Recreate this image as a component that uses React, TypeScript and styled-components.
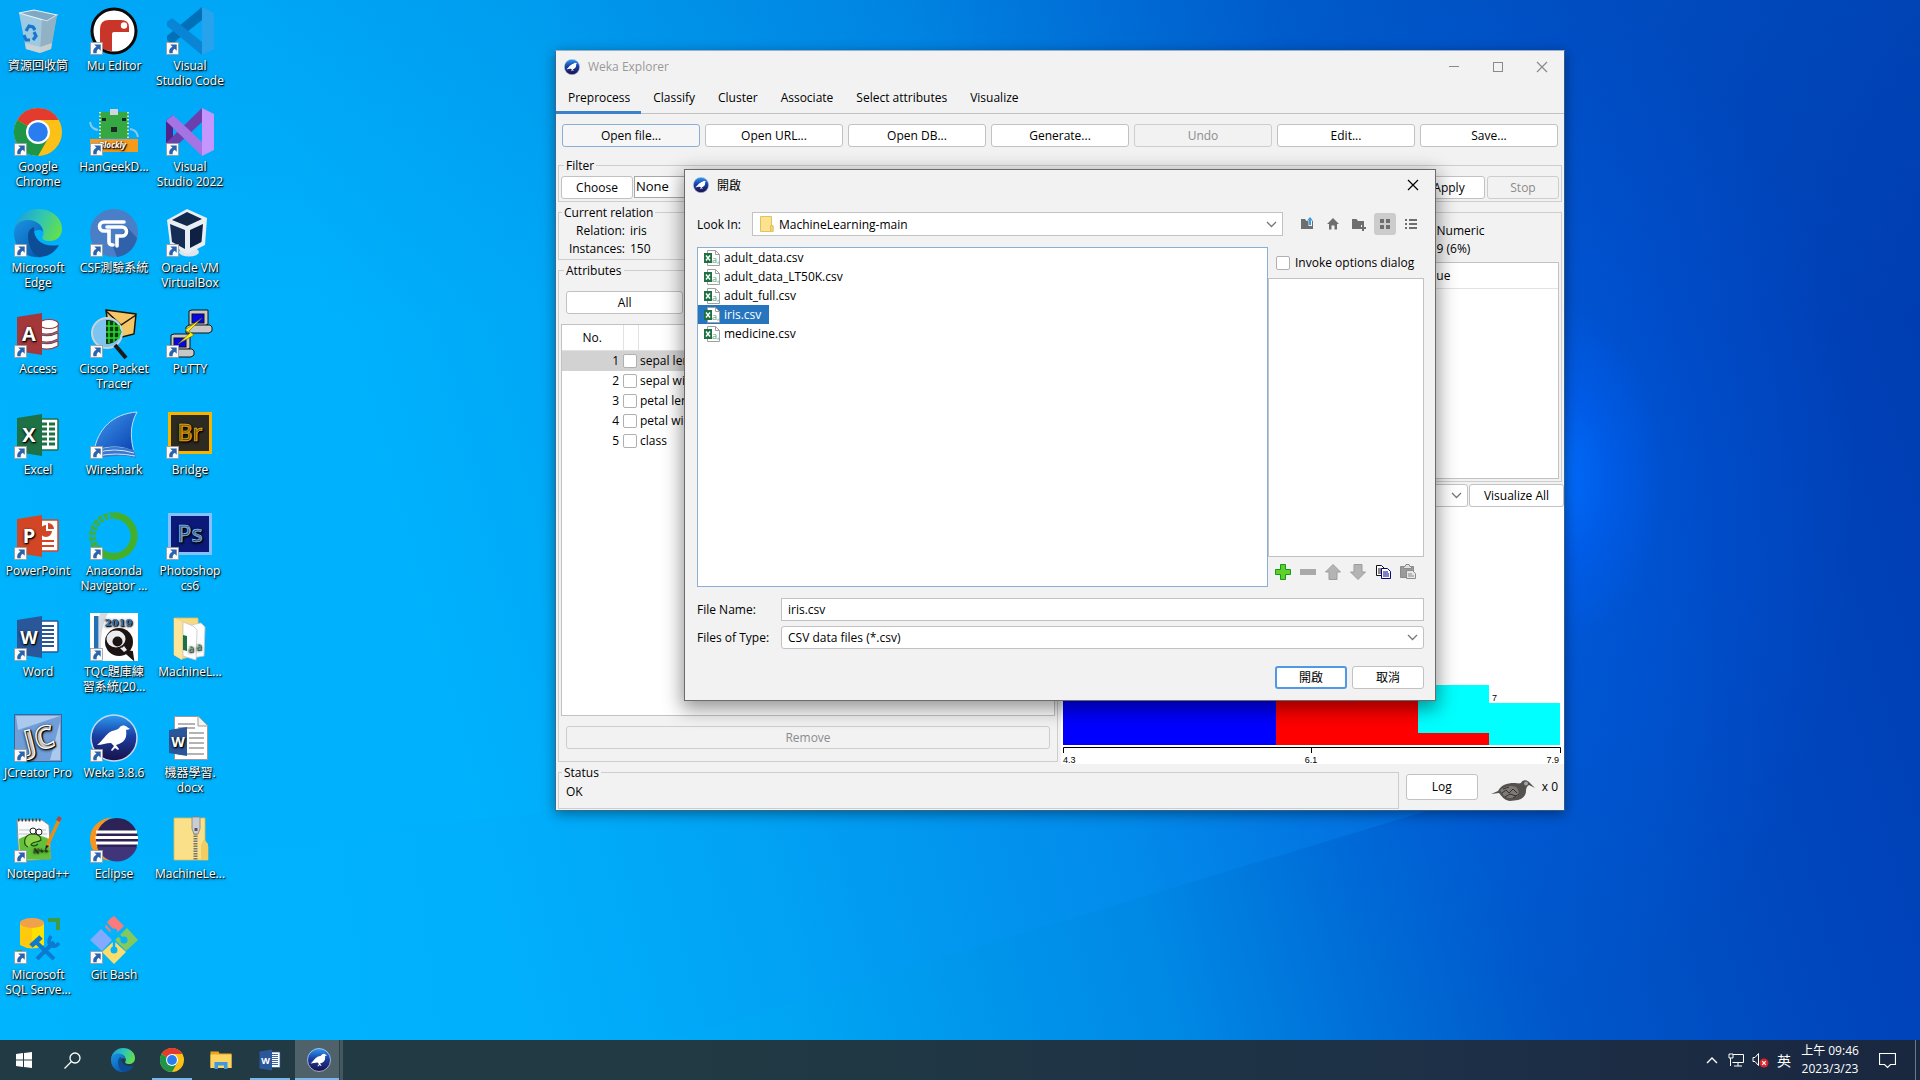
import React, { useState } from 'react';
import styled, { createGlobalStyle, css } from 'styled-components';

const uiFont = '"Open Sans", "Noto Sans CJK TC", sans-serif';

const GlobalStyle = createGlobalStyle`
  * { box-sizing: border-box; }
  html, body { margin: 0; height: 100%; overflow: hidden; }
  #root { height: 100%; }
  body, button, input, select { font-family: ${uiFont}; font-size: 12px; color: #000; }
  button, input, select { margin: 0; padding: 0; }
`;

/* ---------- desktop ---------- */

const Desktop = styled.div`
  position: relative;
  display: flex;
  flex-direction: column;
  height: 100vh;
  overflow: hidden;
  isolation: isolate;
  background:
    radial-gradient(ellipse 110px 170px at 81% 44%, rgba(0, 110, 255, 0.95), rgba(0, 100, 255, 0.4) 50%, transparent),
    radial-gradient(ellipse 340px 520px at 79% 46%, rgba(0, 98, 240, 0.55), transparent),
    linear-gradient(180deg, rgba(0, 110, 210, 0.18), transparent 30%),
    linear-gradient(75deg, #00b4fd 0%, #00b2fd 24%, #00a4f3 37%, #0088e5 54%, #0070d8 62%, #0057c9 71%, #0046bd 84%, #003aaf 100%);
`;

const Wallpaper = styled.svg`
  position: absolute;
  inset: 0;
  width: 100%;
  height: 100%;
  z-index: -1;
`;

const IconGrid = styled.ul`
  flex: 1;
  align-self: flex-start;
  display: grid;
  grid-auto-flow: column;
  grid-template-rows: repeat(10, 101px);
  grid-auto-columns: 76px;
  margin: 0;
  padding: 7px 0 0;
  list-style: none;
`;

const DesktopLink = styled.a`
  display: flex;
  flex-direction: column;
  align-items: center;
  gap: 3px;
  color: #fff;
  text-decoration: none;
  text-align: center;
  line-height: 15px;
  white-space: pre;
  text-shadow: 1px 1px 1px #000, 0 1px 3px rgba(0, 0, 0, 0.9);
`;

const Picture = styled.svg`
  display: block;
  width: 48px;
  height: 48px;
  overflow: visible;
`;

/* ---------- shared controls ---------- */

const Button = styled.button<{ $wide?: boolean; $tone?: 'plain' | 'focus' | 'default' }>`
  height: 23px;
  width: ${p => (p.$wide ? '100%' : '72px')};
  flex: none;
  border: 1px solid #c2c2c2;
  border-radius: 3px;
  background: #fff;
  line-height: 20px;
  ${p => p.$tone === 'focus' && css`background: #f6f6f6; border-color: #89b0d4;`}
  ${p => p.$tone === 'default' && css`border: 2px solid #4f9ae3; line-height: 18px;`}
  &:disabled { background: #f2f2f2; border-color: #cdcdcd; color: #8c8c8c; }
`;

const CheckBox = styled.input`
  appearance: none;
  flex: none;
  display: block;
  width: 14px;
  height: 14px;
  border: 1px solid #b0b0b0;
  border-radius: 2px;
  background: #fff;
  &:checked { background: #4f9ae3; }
`;

const Group = styled.fieldset<{ $pad: string }>`
  min-width: 0;
  margin: 0;
  border: 1px solid #cdcdcd;
  padding: ${p => p.$pad};
`;

const Legend = styled.legend`
  margin-left: 3px;
  padding: 2px 2px 0;
  line-height: 14px;
`;

/* ---------- explorer window ---------- */

const ExplorerWindow = styled.main`
  position: absolute;
  left: 555px;
  top: 50px;
  width: 1010px;
  border: 1px solid rgba(70, 100, 130, 0.7);
  border-top-color: #9ab0c4;
  background: #f2f2f2;
  background-clip: padding-box;
  box-shadow: 0 3px 12px rgba(0, 0, 0, 0.4);
`;

const TitleBar = styled.header<{ $active?: boolean }>`
  display: flex;
  align-items: center;
  gap: 8px;
  height: ${p => (p.$active ? '30px' : '31px')};
  padding-left: 8px;
  color: ${p => (p.$active ? '#000' : '#999')};
  line-height: 16px;
`;

const TitleText = styled.h1`
  flex: 1;
  margin: 0;
  font-size: 12px;
  font-weight: 400;
`;

const DialogTitle = styled(TitleText)`
  padding-top: 2px;
`;

const CaptionButtons = styled.div`
  display: flex;
`;

const CaptionButton = styled.button<{ $active?: boolean }>`
  display: grid;
  place-items: center;
  width: 44px;
  height: 30px;
  border: 0;
  background: none;
  color: ${p => (p.$active ? '#000' : '#8a8a8a')};
`;

const TabBar = styled.nav`
  display: flex;
  height: 32px;
  border-bottom: 1px solid #c2c2c2;
`;

const Tab = styled.button<{ $current: boolean }>`
  height: 32px;
  padding: 2px 11px 0 12px;
  border: 0;
  border-bottom: 3px solid ${p => (p.$current ? '#3d81c6' : 'transparent')};
  background: none;
`;

const Toolbar = styled.div`
  display: grid;
  grid-template-columns: repeat(7, 1fr);
  gap: 5px;
  padding: 10px 6px;
`;

const FilterSection = styled.section`
  padding: 0 2px 2px;
`;

const FilterRow = styled.div`
  display: flex;
  gap: 1px;
`;

const FilterField = styled.input`
  flex: 1;
  min-width: 0;
  height: 22px;
  margin-right: 1px;
  padding: 0 1px 3px;
  border: 1px solid #a8a8a8;
  font-size: 13px;
  background: #fff;
`;

const FilterActions = styled.div`
  display: flex;
  gap: 2px;
`;

const Columns = styled.div`
  display: grid;
  grid-template-columns: 1fr 1fr;
  gap: 2px;
`;

const Column = styled.div<{ $pad: string }>`
  display: flex;
  flex-direction: column;
  gap: 2px;
  min-width: 0;
  padding: ${p => p.$pad};
`;

const Facts = styled.dl<{ $cols: string }>`
  display: grid;
  grid-template-columns: ${p => p.$cols};
  column-gap: 5px;
  margin: 0;
  line-height: 18px;
  dt { text-align: right; }
  dd { margin: 0; }
`;

const AttributeGroup = styled(Group)`
  flex: 1;
  display: flex;
  flex-direction: column;
`;

const AttributeStack = styled.div`
  display: flex;
  flex-direction: column;
  gap: 10px;
  height: 483px;
  padding: 13px 0 12px;
`;

const SelectionRow = styled.div<{ $columns: number }>`
  display: grid;
  grid-template-columns: repeat(${p => p.$columns}, 1fr);
  gap: 5px;
  padding: 0 5px;
`;

const SelectedAttribute = styled(Group)`
  display: flex;
  flex-direction: column;
  margin-right: 2px;
`;

const SelectedStack = styled.div`
  display: flex;
  flex-direction: column;
  gap: 4px;
`;

const TableFrame = styled.div<{ $height?: string }>`
  flex: 1 1 auto;
  ${p => p.$height && `height: ${p.$height};`}
  border: 1px solid #c2c2c2;
  background: #fff;
  overflow: hidden;
`;

const Table = styled.table`
  width: 100%;
  table-layout: fixed;
  border-collapse: collapse;
  th, td { padding: 0; font-weight: 400; }
  thead th { height: 25px; border-bottom: 1px solid #e2e2e2; border-right: 1px solid #e2e2e2; }
  thead th:last-child { border-right: 0; }
`;

const NumberHead = styled.th` width: 61px; `;
const TickHead = styled.th` width: 15px; `;

const AttributeRow = styled.tr<{ $current: boolean }>`
  height: 20px;
  background: ${p => (p.$current ? '#d2d2d2' : '#fff')};
  td { line-height: 20px; }
  td:first-child { text-align: right; padding-right: 4px; }
  td:last-child { padding-left: 2px; }
`;

const VisualizeRow = styled.div`
  display: flex;
  gap: 1px;
`;

const VisualizeButton = styled(Button)` width: 95px; `;

const SelectBox = styled.span<{ $tall?: boolean }>`
  position: relative;
  display: flex;
  align-items: center;
  flex: 1;
  min-width: 0;
  height: ${p => (p.$tall ? '24px' : '23px')};
  padding-left: ${p => (p.$tall ? '7px' : '6px')};
  gap: 5px;
  border: 1px solid #c2c2c2;
  border-radius: ${p => (p.$tall ? '0' : '3px')};
  background: #fff;
`;

const Select = styled.select`
  appearance: none;
  flex: 1;
  min-width: 0;
  height: 100%;
  border: 0;
  background: transparent;
  outline: 0;
`;

const Arrow = styled.svg`
  position: absolute;
  right: 5px;
  pointer-events: none;
`;

const ChartPanel = styled.div`
  margin-top: -2px;
  background: #fff;
`;

const Chart = styled.svg`
  display: block;
  width: 100%;
  font: 9px "Liberation Sans", sans-serif;
`;

const StatusRow = styled.footer`
  display: flex;
  align-items: center;
  padding: 0 6px 1px 2px;
`;

const StatusGroup = styled(Group)`
  flex: 1;
`;

const StatusText = styled.output`
  display: block;
  padding: 0 7px;
  line-height: 18px;
`;

const LogButton = styled(Button)`
  height: 26px;
  margin: 0 13px 0 7px;
`;

const Workers = styled.span`
  display: flex;
  align-items: center;
  gap: 7px;
`;

/* ---------- open dialog ---------- */

const Dialog = styled.section`
  position: absolute;
  left: 684px;
  top: 169px;
  width: 752px;
  border: 1px solid #6b6b6b;
  background: #f2f2f2;
  box-shadow: 0 6px 18px 2px rgba(0, 0, 0, 0.42);
`;

const DialogBody = styled.div`
  display: flex;
  flex-direction: column;
  gap: 11px;
  padding: 12px 11px 11px 12px;
`;

const LookRow = styled.div`
  display: flex;
  align-items: center;
  gap: 13px;
  padding-right: 2px;
`;

const LookLabel = styled.label`
  flex: none;
  width: 42px;
  white-space: nowrap;
`;

const ViewTools = styled.div`
  display: flex;
  gap: 4px;
`;

const ToolButton = styled.button<{ $pressed?: boolean }>`
  display: grid;
  place-items: center;
  width: 22px;
  height: 22px;
  border: 0;
  border-radius: 3px;
  background: ${p => (p.$pressed ? '#cccccc' : 'none')};
`;

const Browser = styled.div`
  display: grid;
  grid-template-columns: 1fr 156px;
  height: 340px;
`;

const FileList = styled.div`
  display: flex;
  flex-direction: column;
  align-items: flex-start;
  border: 1px solid #89b0d4;
  background: #fff;
`;

const FileItem = styled.button<{ $selected: boolean }>`
  display: flex;
  align-items: center;
  gap: 4px;
  height: 19px;
  padding: 0 8px 0 6px;
  border: 0;
  background: ${p => (p.$selected ? '#2675bf' : 'none')};
  color: ${p => (p.$selected ? '#fff' : '#000')};
`;

const Accessory = styled.div`
  display: flex;
  flex-direction: column;
`;

const InvokeLabel = styled.label`
  display: flex;
  align-items: center;
  gap: 5px;
  height: 31px;
  padding-left: 8px;
  white-space: nowrap;
`;

const OptionArea = styled.div`
  flex: 1;
  border: 1px solid #c2c2c2;
  background: #fff;
`;

const OptionTools = styled.div`
  display: flex;
  gap: 3px;
  padding: 4px 0 4px 4px;
`;

const Fields = styled.div`
  display: grid;
  grid-template-columns: 84px 1fr;
  align-items: center;
  row-gap: 5px;
`;

const NameField = styled.input`
  height: 23px;
  padding: 0 6px;
  border: 1px solid #c2c2c2;
  background: #fff;
  outline: 0;
`;

const Actions = styled.div`
  display: flex;
  justify-content: flex-end;
  gap: 5px;
  padding-top: 6px;
`;

/* ---------- taskbar ---------- */

const Taskbar = styled.footer`
  display: flex;
  gap: 3px;
  flex: none;
  height: 40px;
  color: #fff;
  background: linear-gradient(90deg, #213a43 0%, #213a43 35%, #1d3047 75%, #19273f 100%);
`;

const TaskGroup = styled.div<{ $spaced?: boolean }>`
  display: flex;
  gap: ${p => (p.$spaced ? '1px' : '0')};
`;

const TaskButton = styled.button<{ $state?: 'open' | 'active' }>`
  position: relative;
  display: grid;
  place-items: center;
  width: 48px;
  height: 40px;
  border: 0;
  background: ${p =>
    p.$state === 'active' ? 'linear-gradient(90deg, #4f6269 44px, #2a3f47 44px, #2a3f47 45px, #46585f 45px)' : 'none'};
  &::after {
    content: '';
    position: absolute;
    bottom: 0;
    left: ${p => (p.$state === 'active' ? '0' : '4px')};
    right: 4px;
    height: 2px;
    background: ${p => (p.$state ? '#76b9ed' : 'transparent')};
  }
`;

const Tray = styled.div`
  display: flex;
  align-items: center;
  margin: 0 4px 0 auto;
  padding-right: 5px;
  border-right: 1px solid #6e7884;
`;

const TrayButton = styled.button<{ $width: string }>`
  display: grid;
  place-items: center;
  width: ${p => p.$width};
  height: 40px;
  border: 0;
  background: none;
  color: #fff;
`;

const Language = styled(TrayButton)` font-size: 14px; `;

const Clock = styled.time`
  width: 68px;
  text-align: center;
  line-height: 18px;
  white-space: pre;
`;

/* ---------- drawings ---------- */

const GlyphText = styled.text<{ $weight?: number }>`
  font-family: "Open Sans", sans-serif;
  font-weight: ${p => p.$weight || 700};
`;

const Shortcut = () => (
  <g>
    <rect x="0.5" y="35.5" width="12" height="12" fill="#fafafa" stroke="#9a9a9a" strokeWidth="0.8" />
    <path d="M4.3 37.5h6.4v6.3l-2-2c-1.6.8-2.2 2.2-2 4.4H3.4c-.8-3.2.6-5.200 3.1-6.500z" fill="#2a62ab" />
  </g>
);

const RecycleArt = () => (
  <g>
    <path d="M5 6l7 36 14 4 11-4 6-34-10 5z" fill="#b9cfdd" opacity="0.85" />
    <path d="M5 6L20 3l23 5-10 6z" fill="#7fa9c2" stroke="#e6eff5" strokeWidth="1.2" />
    <path d="M28 13l5 1 10-6-6 34-11 4z" fill="#8ea9ba" opacity="0.75" />
    <path d="M11 36l15 4 12-4-1 6-11 4-14-4z" fill="#d5d5d3" opacity="0.8" />
    <g fill="none" stroke="#1677cf" strokeWidth="3.2">
      <path d="M12 24l3-5 4 1 2 3" />
      <path d="M10 28l2 5h4" />
      <path d="M19 33l3-4-2-4" />
    </g>
  </g>
);

const MuArt = () => (
  <g>
    <circle cx="24" cy="24" r="22" fill="#fff" stroke="#0a0a0a" strokeWidth="3" />
    <path d="M10 40V22q0-9 9-9h12q8 0 8 7v5H24q-2 0-2 2v17q-7 0-12-4z" fill="#c93528" />
    <circle cx="34" cy="18.5" r="3.200" fill="#fff" />
  </g>
);

const CodeArt = () => (
  <g>
    <path d="M36 0l12 6v36l-12 6z" fill="#27a3ee" />
    <path d="M36 0v13L6 37 1 33v-4z" fill="#0070b8" />
    <path d="M36 48V35L6 11 1 15v4z" fill="#0a84d4" />
  </g>
);

const StudioArt = () => (
  <g>
    <path d="M0 13l7-6v34l-7-6z" fill="#52218a" />
    <path d="M36 0v14L7 41l-7-6z" fill="#6b3fae" />
    <path d="M7 7l29 27v14L0 13z" fill="#a473e4" />
    <path d="M36 0l12 6v36l-12 6z" fill="#c596ff" />
  </g>
);

const ChromeArt = () => (
  <g>
    <circle cx="24" cy="24" r="24" fill="#fbc116" />
    <path d="M3.2 12a24 24 0 0 1 41.6 0H24v12z" fill="#e33b2e" />
    <path d="M3.200 12a24 24 0 0 0 20.800 36l10.400-18L24 24z" fill="#1e9648" />
    <circle cx="24" cy="24" r="12" fill="#fff" />
    <circle cx="24" cy="24" r="9.800" fill="#2a7df0" />
  </g>
);

const EdgeArt = ({ id }: { id: string }) => (
  <g>
    <defs>
      <linearGradient id={`${id}-top`} x1="0" x2="1" y1="0.3" y2="0.6">
        <stop offset="0" stopColor="#1b9fdc" />
        <stop offset="0.5" stopColor="#2fc6b4" />
        <stop offset="1" stopColor="#64e04b" />
      </linearGradient>
      <linearGradient id={`${id}-side`} x1="0" x2="0.7" y1="0" y2="1">
        <stop offset="0" stopColor="#1a94e4" />
        <stop offset="1" stopColor="#0a5bb0" />
      </linearGradient>
    </defs>
    <path d="M0 22C2 8 12 0 24 0c14 0 24 9 24 20 0 8-6 12-12 12-6 0-9-2-7-5 2-4 0-14-13-15C8 12 2 16 0 22z" fill={`url(#${id}-top)`} />
    <path d="M0 24c0-8 6-13 14-13 9 0 15 6 15 12-3-5-13-2-13 9 0 8 4 13 12 16C12 50 0 39 0 24z" fill={`url(#${id}-side)`} />
    <path d="M14 27c0-5 3-8 6-9-1 12 8 21 25 18-5 9-13 12-20 12C18 45 14 36 14 27z" fill="#0c4d95" />
  </g>
);

const BlocklyArt = () => (
  <g>
    <path d="M0 14q1 7 8 8M40 21q7 1 8 8" fill="none" stroke="#8cc9ee" strokeWidth="2" />
    <path d="M10 4h28v26H10z" fill="#35a844" />
    <path d="M10 4v26M38 4v26" stroke="#d9e6a2" strokeWidth="2" strokeDasharray="1.5 2" />
    <rect x="20" y="1" width="8" height="6" fill="#d2d6da" />
    <rect x="21" y="19" width="6" height="5" fill="#1f2a26" />
    <rect x="12" y="10" width="4" height="3" fill="#112233" />
    <rect x="32" y="10" width="4" height="3" fill="#112233" />
    <rect x="0" y="31" width="48" height="13" fill="#f59a1c" />
    <GlyphText x="9" y="40" fontSize="8" fill="#fff" fontStyle="italic">Blockly</GlyphText>
  </g>
);

const CsfArt = () => (
  <g>
    <circle cx="24" cy="24" r="24" fill="#4a7fc8" />
    <path d="M37 18l10 11c-2 10-10 18-20 19l-4-10z" fill="#2f62a8" />
    <g fill="none" stroke="#fff" strokeWidth="3.600" strokeLinecap="round">
      <path d="M34 13H14a4.500 4.500 0 0 0 0 9h5v11q0 3 4 3" />
      <path d="M17 18h15a4.500 4.500 0 0 1 0 9h-5v10" />
    </g>
  </g>
);

const VirtualBoxArt = () => (
  <g>
    <path d="M13 38l9 8q6 2 10-3V33z" fill="#8b98ab" />
    <ellipse cx="23" cy="43" rx="10" ry="4.500" fill="#dfe5ec" />
    <path d="M1 11L21 0l20 9-2 27-18 9L4 35z" fill="#e9eef4" />
    <path d="M6 11l15-8 15 7-15 7z" fill="#13294c" />
    <path d="M4 15l15 6v19L6 33z" fill="#152d55" />
    <path d="M24 21l13-6-1.500 18L24 39z" fill="#0e2144" />
  </g>
);

type OfficeKind = 'access' | 'excel' | 'powerpoint' | 'word';
const officeColors: Record<OfficeKind, [string, string]> = {
  access: ['#a4373a', 'A'],
  excel: ['#1e7145', 'X'],
  powerpoint: ['#d24625', 'P'],
  word: ['#2a569a', 'W'],
};

const OfficeArt = ({ kind }: { kind: OfficeKind }) => {
  const [color, letter] = officeColors[kind];
  return (
    <g>
      {kind === 'access' ? (
        <g fill="#fff" stroke={color} strokeWidth="1.2">
          <path d="M26 33v5q9 3 18-2v-5q-8 4-18 2zM26 25v6q9 3 18-2v-6q-8 4-18 2zM26 17v6q9 3 18-2v-6q-8 4-18 2z" />
          <ellipse cx="35" cy="14" rx="9.500" ry="4.500" />
        </g>
      ) : (
        <rect x="24" y="8" width="20" height="31" rx="1" fill="#fff" stroke={color} strokeWidth="1.500" />
      )}
      {kind === 'excel' && <path d="M28 13h5M35 13h6M28 18h5M35 18h6M28 23h5M35 23h6M28 28h5M35 28h6M28 33h5M35 33h6" stroke={color} strokeWidth="3" />}
      {kind === 'word' && <path d="M28 13h12M28 17h12M28 21h12M28 25h12M28 29h12M28 33h12" stroke={color} strokeWidth="1.800" />}
      {kind === 'powerpoint' && (
        <g fill={color}>
          <path d="M32 13v6h6a6 6 0 1 1-6-6z" />
          <path d="M34 11a6 6 0 0 1 6 6h-6z" />
          <path d="M28 28h12v2H28zM28 33h12v2H28z" />
        </g>
      )}
      <path d="M3 7l25-4v42L3 41z" fill={color} />
      <GlyphText x="15" y="31" fontSize={kind === 'word' ? 18 : 20} fill="#fff" textAnchor="middle">{letter}</GlyphText>
    </g>
  );
};

const PacketArt = () => (
  <g>
    <path d="M16 0l30 4-2 20-24 6z" fill="#f3c765" stroke="#1c1408" strokeWidth="1.5" />
    <path d="M16 1l15 14L46 5" fill="none" stroke="#1c1408" strokeWidth="1.5" />
    <circle cx="17" cy="23" r="15" fill="#7fc4ee" stroke="#c9d4da" strokeWidth="2" />
    <path d="M16 10q12-1 15 12-3 12-15 12z" fill="#0d3a12" />
    <path d="M19 11v22M24 12v20M29 16v12M16 16h14M16 22h16M16 28h14" stroke="#23dc2c" strokeWidth="1.5" />
    <path d="M25 35l11 13" stroke="#1a1a1a" strokeWidth="4" />
  </g>
);

const Pc = ({ x, y }: { x: number; y: number }) => (
  <g transform={`translate(${x} ${y})`}>
    <path d="M2 1l3-1h16v14l-3 2H2z" fill="#c7c7c7" stroke="#111" />
    <rect x="5" y="4" width="12" height="9" fill="#0606e8" stroke="#111" />
    <path d="M-1 17l3-2h21l2 2v4l-3 2H-1z" fill="#c7c7c7" stroke="#111" />
  </g>
);

const PuttyArt = () => (
  <g>
    <Pc x={21} y={0} />
    <Pc x={3} y={24} />
    <path d="M36 8L19 20l5 3-12 11 16-9-5-4z" fill="#ffee10" stroke="#6a6200" strokeWidth="0.6" />
  </g>
);

const SharkArt = () => (
  <g>
    <defs>
      <linearGradient id="fin" x1="0" x2="1" y1="0" y2="1">
        <stop offset="0" stopColor="#3f9af0" />
        <stop offset="1" stopColor="#0a3fae" />
      </linearGradient>
    </defs>
    <path d="M4 40C8 18 22 3 47 1c-8 14-6 29-3 40-12-7-26-6-40-1z" fill="url(#fin)" stroke="#bfe0f8" strokeWidth="1" />
    <path d="M3 41q20-9 41-2l2 8q-10-3-20-2t-22 2z" fill="#3a78cf" />
    <path d="M6 42q18-6 38 0M8 45q18-4 37 0" stroke="#cfe4f8" strokeWidth="1" fill="none" />
  </g>
);

const AdobeArt = ({ letters, ink, frame, fill }: { letters: string; ink: string; frame: string; fill: string }) => (
  <g>
    <rect x="3.500" y="2.500" width="41" height="39" fill={fill} stroke={frame} strokeWidth="3" />
    <GlyphText $weight={600} x="24" y="30" fontSize="23" fill={ink} stroke={ink} strokeWidth="0.6" textAnchor="middle">{letters}</GlyphText>
  </g>
);

const AnacondaArt = () => (
  <g fill="none" stroke="#44b02a">
    <path d="M24 3.500a20.500 20.500 0 1 1-18 31" strokeWidth="7" />
    <path d="M5 34A20.500 20.500 0 0 1 24 3.500" strokeWidth="6.500" strokeDasharray="4 1.600" />
    <path d="M4 31A20.500 20.500 0 0 1 24 4" strokeWidth="1.500" stroke="#04adfb" strokeDasharray="2 3" />
  </g>
);

const TqcArt = () => (
  <g>
    <rect width="48" height="48" fill="#fff" />
    <path d="M10 0h8q-10 20-6 48H9V4z" fill="#d7dade" />
    <rect x="4" y="3" width="4.500" height="37" fill="#2271b5" />
    <text x="28.500" y="12.500" fontSize="10" fill="#2b6cb0" textAnchor="middle" fontFamily="DejaVu Serif, serif" fontWeight="700">2019</text>
    <circle cx="29" cy="29" r="14" fill="#1c1413" />
    <path d="M34 38l9 8-1-7z" fill="#1c1413" stroke="#1c1413" strokeWidth="2" />
    <ellipse cx="26" cy="26" rx="9.500" ry="8.500" fill="#ececed" />
    <circle cx="27.500" cy="28.500" r="5" fill="#1c1413" />
    <path d="M30 35q3 0 4-2l3 4-3 2z" fill="#ececed" />
  </g>
);

const FolderDocsArt = () => (
  <g>
    <path d="M8 5h24l1 36-17 5-8-4z" fill="#f6d980" stroke="#e0bb52" strokeWidth="0.8" />
    <path d="M25 12l10-2 4 4-1 29-12 2z" fill="#fcfcfc" stroke="#c7c7c7" strokeWidth="0.8" />
    <path d="M17 9l10 4 4 4-1 30-13-4z" fill="#fff" stroke="#c7c7c7" strokeWidth="0.8" />
    <path d="M8 5l8 4v38l-8-5z" fill="#fce59a" />
    <path d="M17 22l4 1v15l-4-1z" fill="#1e7145" />
    <GlyphText $weight={400} x="22" y="39" fontSize="10" fill="#59a57b">a</GlyphText>
    <GlyphText $weight={400} x="30" y="37" fontSize="10" fill="#59a57b">a</GlyphText>
  </g>
);

const JCreatorArt = () => (
  <g>
    <rect x="0.5" y="0.5" width="47" height="47" fill="#6f9ed9" stroke="#44638e" />
    <path d="M2 2h44L4 16zM46 8v38L36 46z" fill="#c4daf5" opacity="0.7" />
    <GlyphText x="25" y="36" fontSize="31" fill="#fff" stroke="#fff" strokeWidth="1.2" textAnchor="middle" transform="rotate(-14 24 24)">JC</GlyphText>
  </g>
);

const WekaArt = ({ id }: { id: string }) => (
  <g>
    <defs>
      <linearGradient id={id} x1="0" x2="0" y1="0" y2="1">
        <stop offset="0" stopColor="#2c9cf0" />
        <stop offset="0.45" stopColor="#1a3fa5" />
        <stop offset="1" stopColor="#1a0f45" />
      </linearGradient>
    </defs>
    <circle cx="24" cy="24" r="23" fill={`url(#${id})`} stroke="#c8d8f2" strokeWidth="1.5" />
    <path d="M7 31c6-4 8-11 15-14 3-1 6-1 8-4 2-2 5-2 7 0l3 2-4 1c1 6 0 11-7 14l-3 1 3 4-1 1-3-2-3 3-1-1 3-4-3-3c-5 0-9 2-14 2z" fill="#fff" />
  </g>
);

const DocxArt = () => (
  <g>
    <path d="M8.500 2.500h24l9 9v34h-33z" fill="#fff" stroke="#9b9b9b" />
    <path d="M32 2.500v9.500h9.500" fill="#f2f2f2" stroke="#9b9b9b" />
    <path d="M12 10h17M12 14h17M23 19h15M23 24h15M23 29h15M23 34h15M12 40h26" stroke="#9a9a9a" strokeWidth="1.5" />
    <path d="M3 16l18-3v29L3 39z" fill="#2a569a" />
    <GlyphText x="12" y="33" fontSize="14" fill="#fff" textAnchor="middle">W</GlyphText>
  </g>
);

const NotepadArt = () => (
  <g>
    <path d="M3 5h25l7 5 2 34-32 2z" fill="#fafafa" stroke="#8d8d8d" />
    <path d="M5 24q14-8 30 0l2 20-31 1z" fill="#5fc23a" />
    <path d="M5 15h27M5 19h28" stroke="#b4c5cf" />
    <path d="M4 5h24" stroke="#444" strokeWidth="3" strokeDasharray="1.5 2" />
    <path d="M14 32c-5-2-5-12 4-13 6-1 9 3 9 6-3 3-9 1-10 5q4 2 7-1" fill="#8cd34d" stroke="#214d12" strokeWidth="1.2" />
    <circle cx="19" cy="16" r="3" fill="#fff" stroke="#222" />
    <circle cx="25" cy="17" r="3" fill="#fff" stroke="#222" />
    <GlyphText $weight={400} x="19" y="38" fontSize="8" fontStyle="italic" fill="#222">N++</GlyphText>
    <path d="M33 31L45 5" stroke="#e58e1a" strokeWidth="3.5" />
    <path d="M44 6l2-4" stroke="#b14a3c" strokeWidth="4" />
    <path d="M31 35l1-5 3 1z" fill="#222" />
  </g>
);

const EclipseArt = () => (
  <g>
    <path d="M22 2C8 4 0 13 0 24s8 20 20 22C12 41 8 33 8 24S13 6 22 2z" fill="#f7941e" />
    <circle cx="27" cy="24" r="21" fill="#2c2255" />
    <path d="M7 32h40a21 21 0 0 1-40 0z" fill="#40347a" />
    <path d="M6 17h41M5.500 22.500h42.500M6 28h42" stroke="#fff" strokeWidth="2.800" />
  </g>
);

const ZipArt = () => (
  <g>
    <path d="M8 3h31v25l3 3v14H8z" fill="#fbe08a" stroke="#e0b94d" strokeWidth="0.8" />
    <path d="M38 24l4 5v16h-7V30z" fill="#f2cd64" />
    <path d="M29.500 18v27" stroke="#777" strokeWidth="4" strokeDasharray="1.5 1" />
    <path d="M26 2h8v12l-2 5h-4l-2-5z" fill="#c9ccd0" stroke="#7d8084" strokeWidth="0.8" />
    <rect x="28.500" y="13" width="3" height="3" fill="#555" />
  </g>
);

const SqlArt = () => (
  <g>
    <path d="M6 7v22q12 7 24 0V7z" fill="#ffc90e" />
    <path d="M18 7v25q8 0 12-3V7z" fill="#ffe100" />
    <ellipse cx="18" cy="7" rx="12" ry="5" fill="#f2a14b" />
    <path d="M34 2h12v12h-4V6h-8z" fill="#3f9b46" />
    <path d="M3 34h5v9H3z" fill="#3f9b46" />
    <g stroke="#0c7ad0" fill="none">
      <path d="M23 43l17-17M22 26l18 17" strokeWidth="4" />
      <path d="M17 30l10-9" strokeWidth="5" />
      <path d="M37 20q-4 6 0 9t8-2" strokeWidth="3.5" />
    </g>
  </g>
);

const GitArt = () => (
  <g>
    <path d="M24 0l10 10-10 10-9-9q2-7 9-11z" fill="#f97b7b" />
    <path d="M37 12l11 12-12 11-11-11z" fill="#83c95b" />
    <path d="M24 25l12 11-12 12-12-12z" fill="#fbdd6c" />
    <path d="M11 13l11 11-10 11L0 24z" fill="#82aaff" />
    <path d="M16 7l8 9v18M26 17l8 7" stroke="#06b3fb" strokeWidth="2.5" fill="none" />
    <circle cx="24" cy="16" r="3.500" fill="#06b3fb" />
    <circle cx="34" cy="24" r="3.500" fill="#06b3fb" />
    <circle cx="24" cy="34" r="3.500" fill="#06b3fb" />
  </g>
);

const FolderArt = () => (
  <g>
    <path d="M3 7h16l2 4h24v29H3z" fill="#e9a61c" />
    <path d="M3 13h42v27H3z" fill="#fcd462" />
    <path d="M11 42V28h26v14h-7v-7H18v7z" fill="#3b9ae0" />
  </g>
);

type Launcher = { label: string; art: React.ReactNode; linked?: boolean };

const launchers: Launcher[] = [
  { label: '資源回收筒', art: <RecycleArt />, linked: false },
  { label: 'Google\nChrome', art: <ChromeArt /> },
  { label: 'Microsoft\nEdge', art: <EdgeArt id="edge-desk" /> },
  { label: 'Access', art: <OfficeArt kind="access" /> },
  { label: 'Excel', art: <OfficeArt kind="excel" /> },
  { label: 'PowerPoint', art: <OfficeArt kind="powerpoint" /> },
  { label: 'Word', art: <OfficeArt kind="word" /> },
  { label: 'JCreator Pro', art: <JCreatorArt /> },
  { label: 'Notepad++', art: <NotepadArt /> },
  { label: 'Microsoft\nSQL Serve...', art: <SqlArt /> },
  { label: 'Mu Editor', art: <MuArt /> },
  { label: 'HanGeekD...', art: <BlocklyArt /> },
  { label: 'CSF測驗系統', art: <CsfArt /> },
  { label: 'Cisco Packet\nTracer', art: <PacketArt /> },
  { label: 'Wireshark', art: <SharkArt /> },
  { label: 'Anaconda\nNavigator ...', art: <AnacondaArt /> },
  { label: 'TQC題庫練\n習系統(20...', art: <TqcArt /> },
  { label: 'Weka 3.8.6', art: <WekaArt id="weka-desk" /> },
  { label: 'Eclipse', art: <EclipseArt /> },
  { label: 'Git Bash', art: <GitArt /> },
  { label: 'Visual\nStudio Code', art: <CodeArt /> },
  { label: 'Visual\nStudio 2022', art: <StudioArt /> },
  { label: 'Oracle VM\nVirtualBox', art: <VirtualBoxArt /> },
  { label: 'PuTTY', art: <PuttyArt /> },
  { label: 'Bridge', art: <AdobeArt letters="Br" ink="#f9b80e" frame="#f4b400" fill="#2d2a22" /> },
  { label: 'Photoshop\ncs6', art: <AdobeArt letters="Ps" ink="#8ac2fb" frame="#86bffa" fill="#0b1a78" /> },
  { label: 'MachineL...', art: <FolderDocsArt />, linked: false },
  { label: '機器學習.\ndocx', art: <DocxArt />, linked: false },
  { label: 'MachineLe...', art: <ZipArt />, linked: false },
];

const Chevron = () => (
  <Arrow width="11" height="7" viewBox="0 0 11 7" aria-hidden>
    <path d="M1 1l4.500 4.500L10 1" fill="none" stroke="#777" strokeWidth="1.3" />
  </Arrow>
);

const CsvIcon = () => (
  <svg width="16" height="16" viewBox="0 0 16 16" aria-hidden>
    <path d="M3.500.5h8l4 4v11h-12z" fill="#fff" stroke="#a0a0a0" />
    <path d="M11.500.5v4h4" fill="none" stroke="#a0a0a0" />
    <rect x="0" y="3" width="8" height="10" fill="#1e7145" />
    <path d="M2 5.500l4 5M6 5.500l-4 5" stroke="#fff" strokeWidth="1.4" />
    <GlyphText $weight={400} x="8" y="13" fontSize="9" fill="#4fa37a">a,</GlyphText>
  </svg>
);

const FolderIcon = () => (
  <svg width="14" height="16" viewBox="0 0 14 16" aria-hidden>
    <path d="M.5.5h11V9l1.500 1v5.500H.5z" fill="#fde38f" stroke="#e3c15f" />
    <path d="M10.500 9.500h2.500v6h-2.500z" fill="#f6d572" stroke="#e3c15f" />
  </svg>
);

const CloseGlyph = () => (
  <svg width="12" height="12" viewBox="0 0 12 12" aria-hidden>
    <path d="M1 1l10 10M11 1L1 11" stroke="currentColor" strokeWidth="1.2" />
  </svg>
);

const WekaMark = ({ id, size }: { id: string; size: number }) => (
  <svg width={size} height={size} viewBox="0 0 48 48" aria-hidden><WekaArt id={id} /></svg>
);

const grey = '#6e6e6e';
const viewTools = [
  { name: 'Up One Level', art: <><path d="M2 3h4l1.500 2H14v8H2z" fill={grey} /><path d="M11 1l4 4h-2v5H9.500V5H8z" fill="#f2f2f2" /><path d="M11 1l3 3.500h-2V9h-2V4.500H8z" fill="#3d9be0" /></> },
  { name: 'Home', art: <path d="M8 2l6 6h-2v5.500H9.500V9.500h-3v4H4V8H2z" fill={grey} /> },
  { name: 'Create New Folder', art: <><path d="M1 3h4.500L7 5h6v4h-3v4H1z" fill={grey} /><path d="M12 9v6M9 12h6" stroke={grey} strokeWidth="2" /></> },
  { name: 'List', pressed: true, art: <path d="M3 3h4v4H3zM9 3h4v4H9zM3 9h4v4H3zM9 9h4v4H9z" fill={grey} /> },
  { name: 'Details', art: <path d="M2 3h2v2H2zM2 7h2v2H2zM2 11h2v2H2zM6 3h8v2H6zM6 7h8v2H6zM6 11h8v2H6z" fill={grey} /> },
];

const optionTools = [
  { name: 'Add', art: <path d="M5.500.5h5v5h5v5h-5v5h-5v-5h-5v-5h5z" fill="#5fd02c" stroke="#149a14" /> },
  { name: 'Remove option', art: <path d="M0 5h16v6H0z" fill="#a9a9a9" /> },
  { name: 'Move up', art: <path d="M8 .5l7.500 7.500H12v7.500H4V8H.5z" fill="#b4b4b4" stroke="#9d9d9d" /> },
  { name: 'Move down', art: <path d="M8 15.500L15.500 8H12V.5H4V8H.5z" fill="#b4b4b4" stroke="#9d9d9d" /> },
  { name: 'Copy', art: <><path d="M1.500 1.500h5l3 3v7h-8z" fill="#fff" stroke="#111" /><path d="M3 5h4M3 7h4M3 9h4" stroke="#111" /><path d="M6.500 4.500h6l3 3v7h-9z" fill="#fff" stroke="#05057c" /><path d="M8 8h5M8 10h6M8 12h6" stroke="#05057c" /></> },
  { name: 'Paste', art: <><path d="M.5 2.500h13v11H.5z" fill="#9b9b9b" stroke="#8b8b8b" /><path d="M3.500 2.500h1.500L6 .5h3l1 2h1.500v2h-8z" fill="#e0e0e0" stroke="#8b8b8b" /><path d="M6.500 6.500h6l3 3v5h-9z" fill="#e6e6e6" stroke="#8b8b8b" /><path d="M8 10h4M8 12h6" stroke="#8b8b8b" /></> },
];

const tabs = ['Preprocess', 'Classify', 'Cluster', 'Associate', 'Select attributes', 'Visualize'];
const commands = ['Open file...', 'Open URL...', 'Open DB...', 'Generate...', 'Undo', 'Edit...', 'Save...'];
const attributes = ['sepal length', 'sepal width', 'petal length', 'petal width', 'class'];
const files = ['adult_data.csv', 'adult_data_LT50K.csv', 'adult_full.csv', 'iris.csv', 'medicine.csv'];

const bins: [string, number][][] = [
  [['#0000ff', 16]],
  [['#0000ff', 30]],
  [['#0000ff', 14], ['#ff0000', 20]],
  [['#ff0000', 28]],
  [['#ff0000', 25]],
  [['#ff0000', 2], ['#00ffff', 8]],
  [['#00ffff', 7]],
];

const Histogram = () => (
  <Chart viewBox="0 0 503 257" role="img" aria-label="sepal length by class">
    {bins.map((stack, i) => {
      let base = 238;
      return stack.map(([color, count], j) => {
        base -= count * 6;
        return <rect key={`${i}-${j}`} x={2 + i * 71} y={base} width="71" height={count * 6} fill={color} shapeRendering="crispEdges" />;
      });
    })}
    <path d="M2.500 246v-5.500h497v5.500M250.500 240v6" fill="none" stroke="#000" />
    <text x="2" y="256">4.3</text>
    <text x="250" y="256" textAnchor="middle">6.1</text>
    <text x="498" y="256" textAnchor="end">7.9</text>
    <text x="431" y="194">7</text>
  </Chart>
);

const Bird = () => (
  <svg width="44" height="30" viewBox="0 -8 44 30" aria-label="Weka">
    <path d="M0 14l7-3c3-6 9-8 16-8 3 0 5 1 7 0 1-3 5-4 8-1l6 6-6-3c-2 1-3 3-3 6 0 5-4 8-8 9l-8 1c-7-1-8-5-11-8z" fill="#55514e" />
    <path d="M9 10q8-6 16-3 4 4 2 9-8 4-14 0z" fill="#7d7975" />
    <path d="M11 13l4-3 3 3 4-4 4 4M14 17l5-3 6 2M12 9l6-2M22 18l6-4" stroke="#34302f" fill="none" />
    <circle cx="35" cy="3.500" r="2" fill="#a8a4a1" />
  </svg>
);

/* ---------- windows ---------- */

function Explorer() {
  const [tab, setTab] = useState('Preprocess');
  return (
    <ExplorerWindow>
      <TitleBar>
        <WekaMark id="weka-title" size={16} />
        <TitleText>Weka Explorer</TitleText>
        <CaptionButtons>
          <CaptionButton aria-label="Minimize"><svg width="10" height="10"><path d="M0 4.500h10" stroke="currentColor" /></svg></CaptionButton>
          <CaptionButton aria-label="Maximize"><svg width="10" height="10"><rect x="0.5" y="0.5" width="9" height="9" fill="none" stroke="currentColor" /></svg></CaptionButton>
          <CaptionButton aria-label="Close"><CloseGlyph /></CaptionButton>
        </CaptionButtons>
      </TitleBar>
      <TabBar>
        {tabs.map(t => <Tab key={t} $current={t === tab} onClick={() => setTab(t)}>{t}</Tab>)}
      </TabBar>
      <Toolbar>
        {commands.map((c, i) => (
          <Button key={c} $wide $tone={i === 0 ? 'focus' : 'plain'} disabled={c === 'Undo'}>{c}</Button>
        ))}
      </Toolbar>
      <FilterSection>
        <Group $pad="3px 2px 2px">
          <Legend>Filter</Legend>
          <FilterRow>
            <Button>Choose</Button>
            <FilterField aria-label="Filter" defaultValue="None" readOnly />
            <FilterActions>
              <Button>Apply</Button>
              <Button disabled>Stop</Button>
            </FilterActions>
          </FilterRow>
        </Group>
      </FilterSection>
      <Columns>
        <Column $pad="0 1px 2px 2px">
          <Group $pad="2px 0 1px">
            <Legend>Current relation</Legend>
            <Facts $cols="66px 1fr">
              <dt>Relation:</dt><dd>iris</dd>
              <dt>Instances:</dt><dd>150</dd>
            </Facts>
          </Group>
          <AttributeGroup $pad="0 2px">
            <Legend>Attributes</Legend>
            <AttributeStack>
              <SelectionRow $columns={4}><Button $wide>All</Button></SelectionRow>
              <TableFrame>
                <Table>
                  <thead>
                    <tr><NumberHead>No.</NumberHead><TickHead /><th /></tr>
                  </thead>
                  <tbody>
                    {attributes.map((a, i) => (
                      <AttributeRow key={a} $current={i === 0}>
                        <td>{i + 1}</td>
                        <td><CheckBox type="checkbox" aria-label={a} /></td>
                        <td>{a}</td>
                      </AttributeRow>
                    ))}
                  </tbody>
                </Table>
              </TableFrame>
              <SelectionRow $columns={1}><Button $wide disabled>Remove</Button></SelectionRow>
            </AttributeStack>
          </AttributeGroup>
        </Column>
        <Column $pad="8px 0 0">
          <SelectedAttribute $pad="9px 2px 2px" aria-label="Selected attribute">
            <SelectedStack>
              <Facts $cols="3fr 1fr">
                <dt /><dd>Numeric</dd>
                <dt /><dd>9 (6%)</dd>
              </Facts>
              <TableFrame $height="217px">
                <Table>
                  <thead><tr><th /><th>Value</th></tr></thead>
                </Table>
              </TableFrame>
            </SelectedStack>
          </SelectedAttribute>
          <VisualizeRow>
            <SelectBox>
              <Select aria-label="Class"><option /></Select>
              <Chevron />
            </SelectBox>
            <VisualizeButton>Visualize All</VisualizeButton>
          </VisualizeRow>
          <ChartPanel><Histogram /></ChartPanel>
        </Column>
      </Columns>
      <StatusRow>
        <StatusGroup $pad="3px 0 7px">
          <Legend>Status</Legend>
          <StatusText>OK</StatusText>
        </StatusGroup>
        <LogButton>Log</LogButton>
        <Workers><Bird />x 0</Workers>
      </StatusRow>
    </ExplorerWindow>
  );
}

function OpenDialog() {
  const [selected, setSelected] = useState('iris.csv');
  return (
    <Dialog role="dialog" aria-label="開啟">
      <TitleBar $active>
        <WekaMark id="weka-dialog" size={16} />
        <DialogTitle as="h2">開啟</DialogTitle>
        <CaptionButton $active aria-label="Close"><CloseGlyph /></CaptionButton>
      </TitleBar>
      <DialogBody>
        <LookRow>
          <LookLabel htmlFor="look-in">Look In:</LookLabel>
          <SelectBox $tall>
            <FolderIcon />
            <Select id="look-in"><option>MachineLearning-main</option></Select>
            <Chevron />
          </SelectBox>
          <ViewTools>
            {viewTools.map(t => (
              <ToolButton key={t.name} aria-label={t.name} $pressed={t.pressed}>
                <svg width="16" height="16" viewBox="0 0 16 16">{t.art}</svg>
              </ToolButton>
            ))}
          </ViewTools>
        </LookRow>
        <Browser>
          <FileList>
            {files.map(f => (
              <FileItem key={f} $selected={f === selected} onClick={() => setSelected(f)}>
                <CsvIcon />{f}
              </FileItem>
            ))}
          </FileList>
          <Accessory>
            <InvokeLabel><CheckBox type="checkbox" />Invoke options dialog</InvokeLabel>
            <OptionArea />
            <OptionTools>
              {optionTools.map(t => (
                <ToolButton key={t.name} aria-label={t.name}>
                  <svg width="16" height="16" viewBox="0 0 16 16">{t.art}</svg>
                </ToolButton>
              ))}
            </OptionTools>
          </Accessory>
        </Browser>
        <Fields>
          <label htmlFor="file-name">File Name:</label>
          <NameField id="file-name" value={selected} onChange={e => setSelected(e.target.value)} />
          <label htmlFor="file-type">Files of Type:</label>
          <SelectBox>
            <Select id="file-type"><option>CSV data files (*.csv)</option></Select>
            <Chevron />
          </SelectBox>
        </Fields>
        <Actions>
          <Button $tone="default">開啟</Button>
          <Button>取消</Button>
        </Actions>
      </DialogBody>
    </Dialog>
  );
}

export default function App() {
  return (
    <Desktop>
      <GlobalStyle />
      <Wallpaper viewBox="0 0 1920 1080" preserveAspectRatio="none" aria-hidden>
        <defs>
          <linearGradient id="beam" x1="0" x2="1" y1="0" y2="0">
            <stop offset="0" stopColor="#08a6ff" stopOpacity="0" />
            <stop offset="1" stopColor="#0a8cff" stopOpacity="0.3" />
          </linearGradient>
        </defs>
        <path d="M0 860L560 812 1560 470 1560 770 1430 810 670 1040H0z" fill="url(#beam)" />
        <path d="M0 0H560V812L0 880z" fill="#00b4ff" opacity="0.1" />
      </Wallpaper>
      <IconGrid>
        {launchers.map(l => (
          <li key={l.label}>
            <DesktopLink href="#">
              <Picture viewBox="0 0 48 48" aria-hidden>{l.art}{l.linked !== false && <Shortcut />}</Picture>
              {l.label}
            </DesktopLink>
          </li>
        ))}
      </IconGrid>
      <Explorer />
      <OpenDialog />
      <Taskbar>
        <TaskGroup>
          <TaskButton aria-label="Start">
            <svg width="16" height="16" viewBox="0 0 16 16"><path d="M0 2l7-1v6.500H0zM8 1l8-1v7.500H8zM0 8.500h7V15l-7-1zM8 8.500h8V16l-8-1z" fill="#fff" /></svg>
          </TaskButton>
          <TaskButton aria-label="Search">
            <svg width="17" height="17" viewBox="0 0 17 17"><circle cx="11" cy="6" r="5" fill="none" stroke="#fff" strokeWidth="1.3" /><path d="M7.500 9.500l-7 7" stroke="#fff" strokeWidth="1.3" /></svg>
          </TaskButton>
        </TaskGroup>
        <TaskGroup $spaced>
          <TaskButton aria-label="Edge"><svg width="24" height="24" viewBox="0 0 48 48"><EdgeArt id="edge-task" /></svg></TaskButton>
          <TaskButton aria-label="Chrome" $state="open"><svg width="24" height="24" viewBox="0 0 48 48"><ChromeArt /></svg></TaskButton>
          <TaskButton aria-label="File Explorer"><svg width="24" height="24" viewBox="0 0 48 48"><FolderArt /></svg></TaskButton>
          <TaskButton aria-label="Word" $state="open"><svg width="24" height="24" viewBox="0 0 48 48"><OfficeArt kind="word" /></svg></TaskButton>
          <TaskButton aria-label="Weka" $state="active"><WekaMark id="weka-task" size={24} /></TaskButton>
        </TaskGroup>
        <Tray>
          <TrayButton $width="24px" aria-label="Hidden icons"><svg width="12" height="8" viewBox="0 0 12 8"><path d="M1 7l5-5 5 5" fill="none" stroke="#fff" strokeWidth="1.4" /></svg></TrayButton>
          <TrayButton $width="24px" aria-label="Network"><svg width="16" height="14" viewBox="0 0 16 14"><path d="M5 1.500h10.500v8H4.500M10 10v3M6 13h8M1 1h4v4H1zM2.500 5v8" fill="none" stroke="#fff" /></svg></TrayButton>
          <TrayButton $width="24px" aria-label="Volume"><svg width="17" height="16" viewBox="0 0 17 16"><path d="M1 5.500h2l3.500-4v12l-3.500-4H1z" fill="none" stroke="#fff" /><circle cx="12" cy="11" r="4.500" fill="#d9252b" /><path d="M10.200 9.200l3.600 3.600M13.800 9.200l-3.600 3.600" stroke="#fff" strokeWidth="1.2" /></svg></TrayButton>
          <Language $width="24px">英</Language>
          <Clock>{'上午 09:46\n2023/3/23'}</Clock>
          <TrayButton $width="46px" aria-label="Notifications"><svg width="17" height="17" viewBox="0 0 17 17"><path d="M.5 1.500h16v11h-5l-3 3-3-3h-5z" fill="none" stroke="#fff" strokeWidth="1.2" /></svg></TrayButton>
        </Tray>
      </Taskbar>
    </Desktop>
  );
}
